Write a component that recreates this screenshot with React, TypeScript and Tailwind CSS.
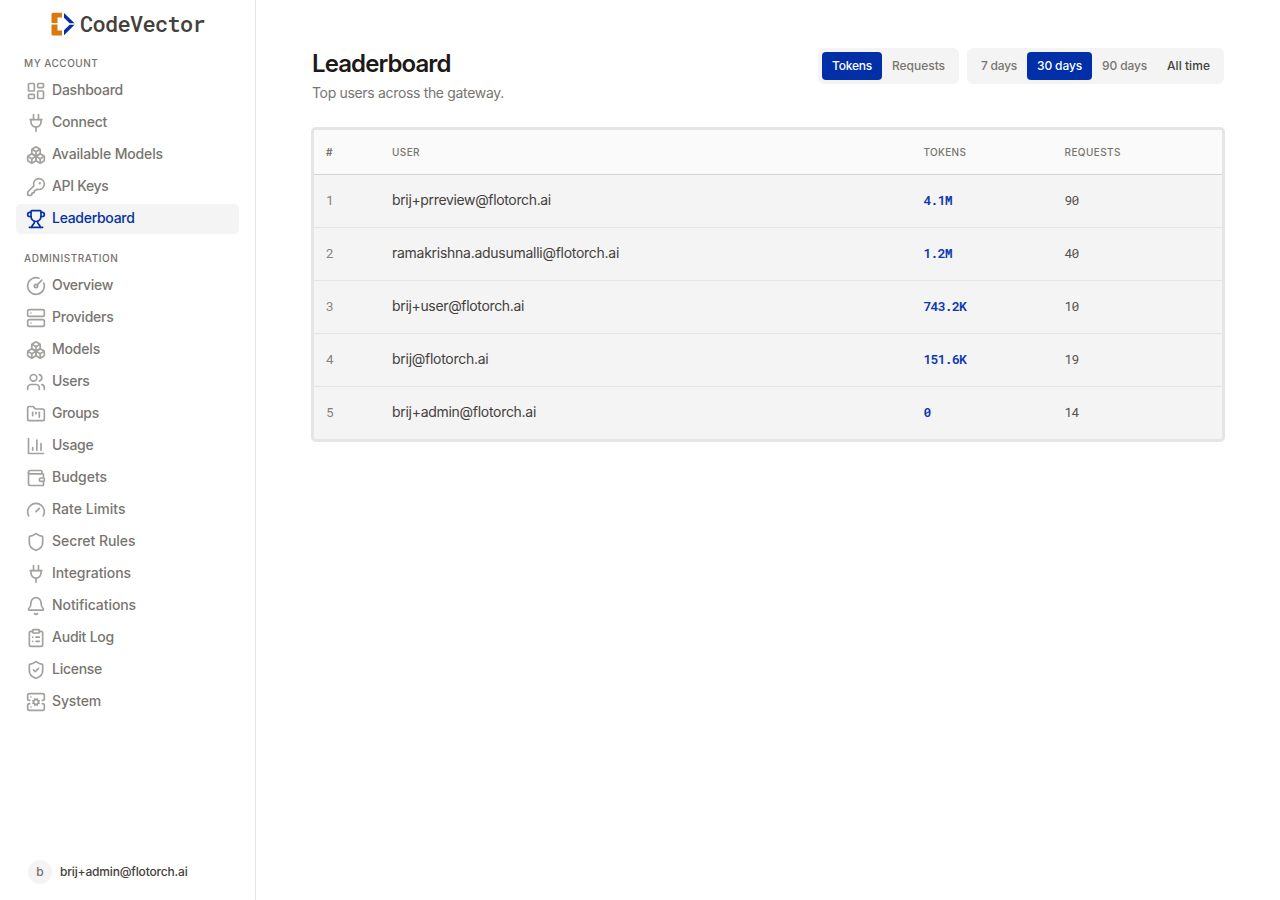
import {
  Bell, Boxes, CircleGauge, ClipboardList, FolderKanban, Gauge, KeyRound, LayoutDashboard,
  Server, ServerCog, Shield, ShieldCheck, Trophy, Users, Wallet,
} from "lucide-react";
import type { ComponentType } from "react";

interface IconProps {
  size?: number;
  strokeWidth?: number;
  className?: string;
}

type IconType = ComponentType<IconProps>;

function BarsIcon({ size = 20, strokeWidth = 2, className }: IconProps) {
  return (
    <svg width={size} height={size} viewBox="0 0 24 24" fill="none" stroke="currentColor" strokeWidth={strokeWidth} strokeLinecap="round" strokeLinejoin="round" className={className}>
      <path d="M3 3v18h18" />
      <path d="M18 17V9" />
      <path d="M13 17V5" />
      <path d="M8 17v-3" />
    </svg>
  );
}

function PlugIcon({ size = 20, strokeWidth = 2, className }: IconProps) {
  return (
    <svg width={size} height={size} viewBox="0 0 24 24" fill="none" stroke="currentColor" strokeWidth={strokeWidth} strokeLinecap="round" strokeLinejoin="round" className={className}>
      <path d="M9 8V2" />
      <path d="M15 8V2" />
      <path d="M5 8h14" />
      <path d="M6 8v3a6 6 0 0 0 12 0V8" />
      <path d="M12 22v-5" />
    </svg>
  );
}

interface NavItem {
  label: string;
  icon: IconType;
  tracking: string;
  active?: boolean;
}

const account: NavItem[] = [
  { label: "Dashboard", icon: LayoutDashboard, tracking: "tracking-[-0.22px]" },
  { label: "Connect", icon: PlugIcon, tracking: "tracking-[-0.23px]" },
  { label: "Available Models", icon: Boxes, tracking: "tracking-[-0.14px]" },
  { label: "API Keys", icon: KeyRound, tracking: "tracking-[-0.32px]" },
  { label: "Leaderboard", icon: Trophy, tracking: "tracking-[-0.29px]", active: true },
];

const administration: NavItem[] = [
  { label: "Overview", icon: CircleGauge, tracking: "tracking-[-0.32px]" },
  { label: "Providers", icon: Server, tracking: "tracking-[-0.25px]" },
  { label: "Models", icon: Boxes, tracking: "tracking-[-0.2px]" },
  { label: "Users", icon: Users, tracking: "tracking-[-0.32px]" },
  { label: "Groups", icon: FolderKanban, tracking: "tracking-[-0.28px]" },
  { label: "Usage", icon: BarsIcon, tracking: "tracking-[-0.25px]" },
  { label: "Budgets", icon: Wallet, tracking: "tracking-[-0.05px]" },
  { label: "Rate Limits", icon: Gauge, tracking: "tracking-[0.03px]" },
  { label: "Secret Rules", icon: Shield, tracking: "tracking-[-0.04px]" },
  { label: "Integrations", icon: PlugIcon, tracking: "tracking-[-0.06px]" },
  { label: "Notifications", icon: Bell, tracking: "tracking-[-0.08px]" },
  { label: "Audit Log", icon: ClipboardList, tracking: "tracking-[-0.23px]" },
  { label: "License", icon: ShieldCheck, tracking: "tracking-[-0.28px]" },
  { label: "System", icon: ServerCog, tracking: "tracking-[-0.15px]" },
];

const rows = [
  { user: "brij+prreview@flotorch.ai", tokens: "4.1M", requests: 90, tracking: "tracking-[-0.35px]" },
  { user: "ramakrishna.adusumalli@flotorch.ai", tokens: "1.2M", requests: 40, tracking: "tracking-[-0.27px]" },
  { user: "brij+user@flotorch.ai", tokens: "743.2K", requests: 10, tracking: "tracking-[-0.34px]" },
  { user: "brij@flotorch.ai", tokens: "151.6K", requests: 19, tracking: "tracking-[-0.27px]" },
  { user: "brij+admin@flotorch.ai", tokens: "0", requests: 14, tracking: "tracking-[-0.29px]" },
];

function NavSection({ title, tracking, items }: { title: string; tracking: string; items: NavItem[] }) {
  return (
    <section>
      <h2 className={`flex h-4 items-center pl-2 text-[10px] font-medium text-[#78716c] ${tracking}`}>{title}</h2>
      <ul className="mt-[5px] flex flex-col gap-0.5">
        {items.map(({ label, icon: Icon, tracking: t, active }) => (
          <li key={label} className={`flex h-[30px] items-center gap-1.5 rounded-[5px] px-2.5 ${active ? "bg-[#f4f4f4] text-[#0530a5]" : "text-[#78756f]"}`}>
            <Icon size={20} strokeWidth={2} className={`shrink-0 ${active ? "" : "text-[#a3a19e]"}`} />
            <span className={`-mt-0.5 text-sm font-medium whitespace-nowrap ${t}`}>{label}</span>
          </li>
        ))}
      </ul>
    </section>
  );
}

function Logo() {
  return (
    <div className="flex h-[55px] items-start gap-1 pt-3 pl-[35px]">
      <svg width="25" height="24" viewBox="0 0 25 24" className="shrink-0">
        <path d="M2 0.7H11V5.6H6.5V11H0.5V2.2Q0.5 0.7 2 0.7Z" fill="#d97b0c" />
        <path d="M0.5 12.6H6.5V18.4H11V23.4H2Q0.5 23.4 0.5 21.9Z" fill="#d97b0c" />
        <path d="M13 0.9V5.8L18.6 11.3H23.6Z" fill="#0530a5" />
        <path d="M13 23.2V18.3L18.6 12.7H23.6Z" fill="#0530a5" />
      </svg>
      <span className="font-['Roboto_Mono','DejaVu_Sans_Mono',monospace] text-[22px] leading-6 font-medium tracking-[-0.7px] text-[#44403c]">CodeVector</span>
    </div>
  );
}

function Segment({ label, tracking, active, strong }: { label: string; tracking: string; active?: boolean; strong?: boolean }) {
  return (
    <button className={`flex h-7 items-center rounded-[4px] px-2.5 text-xs font-medium whitespace-nowrap ${tracking} ${active ? "bg-[#002fa7] text-white" : strong ? "text-[#44403c]" : "text-[#78756f]"}`}>
      {label}
    </button>
  );
}

const grid = "grid grid-cols-[66px_531.5px_141px_1fr] items-center pl-3";
const mono = "font-['Roboto_Mono','DejaVu_Sans_Mono',monospace] text-[13px] leading-4 tracking-[-0.7px]";

export default function App() {
  return (
    <div className="flex h-[900px] w-full overflow-hidden bg-white font-['Inter',sans-serif]">
      <aside className="flex w-64 shrink-0 flex-col border-r border-[#e5e5e4] px-4">
        <Logo />
        <nav className="flex flex-col gap-4">
          <NavSection title="MY ACCOUNT" tracking="tracking-[0.5px]" items={account} />
          <NavSection title="ADMINISTRATION" tracking="tracking-[0.55px]" items={administration} />
        </nav>
        <div className="mt-auto mb-4 flex items-center gap-2 pl-3">
          <div className="flex size-6 items-center justify-center rounded-full bg-[#f4f4f4] text-xs font-medium text-[#78716c]">b</div>
          <span className="text-xs font-medium tracking-[-0.17px] text-[#44403c]">brij+admin@flotorch.ai</span>
        </div>
      </aside>

      <main className="flex-1 pt-12 pr-[55px] pl-[55px]">
        <header className="flex h-[79px] items-start justify-between pr-px pl-px">
          <div>
            <h1 className="text-2xl leading-8 font-semibold tracking-[-0.9px] text-[#1c1917]">Leaderboard</h1>
            <p className="mt-[3px] text-sm tracking-[-0.33px] text-[#78756f]">Top users across the gateway.</p>
          </div>
          <div className="flex gap-2">
            <div className="flex w-[141px] rounded-md bg-[#f4f4f4] p-1">
              <Segment label="Tokens" tracking="tracking-[-0.22px]" active />
              <Segment label="Requests" tracking="tracking-[-0.03px]" />
            </div>
            <div className="flex w-[257px] justify-between rounded-md bg-[#f4f4f4] p-1">
              <Segment label="7 days" tracking="tracking-[-0.24px]" />
              <Segment label="30 days" tracking="tracking-[-0.13px]" active />
              <Segment label="90 days" tracking="tracking-[-0.13px]" />
              <Segment label="All time" tracking="tracking-[0.05px]" strong />
            </div>
          </div>
        </header>

        <div className="overflow-hidden rounded-[5px] border-[3px] border-[#e5e5e5] bg-[#f4f4f4]">
          <div className={`${grid} h-[45px] border-b border-[#d4d4d2] bg-[#fafafa] text-[10px] font-medium text-[#78756f]`}>
            <span className="font-bold">#</span>
            <span className="tracking-[0.41px]">USER</span>
            <span className="tracking-[0.33px]">TOKENS</span>
            <span className="tracking-[0.4px]">REQUESTS</span>
          </div>
          {rows.map((row, i) => (
            <div key={row.user} className={`${grid} h-[53px] border-b border-[#e5e5e4] pb-0.5 last:h-[52px] last:border-b-0`}>
              <span className={`${mono} text-[#85827d]`}>{i + 1}</span>
              <span className={`text-sm text-[#44403c] ${row.tracking}`}>{row.user}</span>
              <span className={`${mono} font-semibold text-[#0a38b0]`}>{row.tokens}</span>
              <span className={`${mono} text-[#57534e]`}>{row.requests}</span>
            </div>
          ))}
        </div>
      </main>
    </div>
  );
}
